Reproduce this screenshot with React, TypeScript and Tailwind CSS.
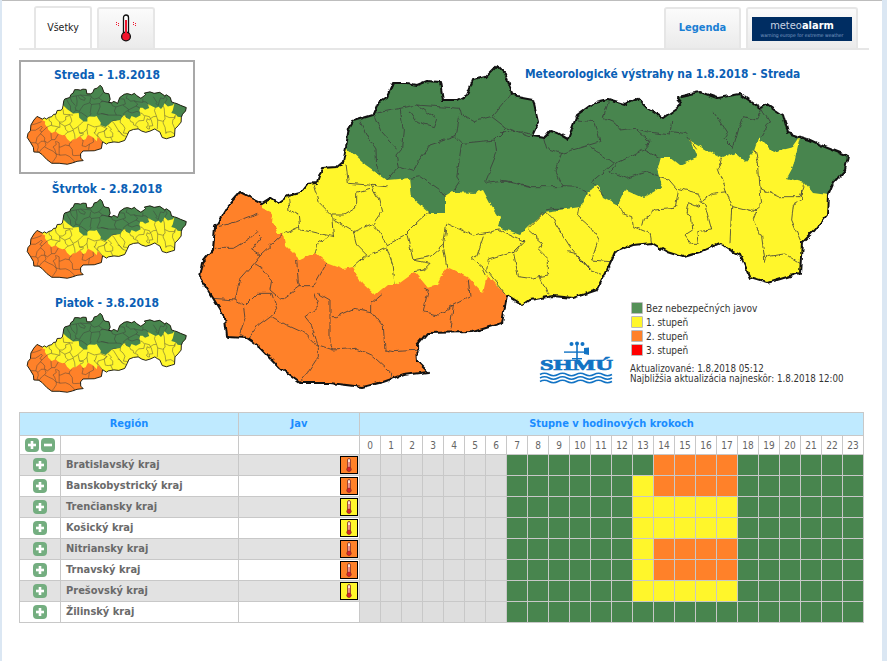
const FONT = "font-['DejaVu_Sans_Condensed','DejaVu_Sans',sans-serif]";

const OUTER =
  "M240,192 262,203 270,198 278,203 288,196 300,193 307,184 317,183 322,168 337,167 343,162 346,147 349,128 353,121 373,115 378,103 387,97 393,83 407,83 417,85 427,81 440,82 443,100 458,100 467,95 473,80 485,77 497,65 505,73 512,93 517,97 533,100 538,122 532,135 545,137 550,131 558,133 568,139 577,115 595,102 608,99 625,104 637,98 647,108 663,118 677,108 682,103 677,97 700,92 717,98 740,94 760,108 767,104 783,115 788,133 800,137 810,140 825,147 848,156 845,170 833,183 828,195 827,215 815,230 802,243 800,273 787,277 767,283 750,278 740,255 730,250 720,243 700,252 683,257 667,252 652,243 633,245 615,252 607,270 597,290 573,298 553,296 530,300 523,305 507,295 502,323 473,332 427,333 417,345 418,362 428,372 403,375 383,382 363,387 330,383 300,383 280,368 260,347 247,338 227,337 225,318 213,298 200,278 203,262 213,250 215,227 227,207Z";

const ORANGE =
  "M240,192 262,203 262,208 273,213 272,223 278,233 283,233 285,245 300,260 315,253 327,263 343,269 353,267 362,283 375,295 387,285 397,285 415,272 428,288 438,285 447,267 468,277 483,293 487,275 507,295 502,323 473,332 427,333 417,345 418,362 428,372 403,375 383,382 363,387 330,383 300,383 280,368 260,347 247,338 227,337 225,318 213,298 200,278 203,262 213,250 215,227 227,207Z";

const GREEN =
  "M346,147 349,128 353,121 373,115 378,103 387,97 393,83 407,83 417,85 427,81 440,82 443,100 458,100 467,95 473,80 485,77 497,65 505,73 512,93 517,97 533,100 538,122 532,135 545,137 550,131 558,133 568,139 577,115 595,102 608,99 625,104 637,98 647,108 663,118 677,108 682,103 677,97 700,92 717,98 740,94 760,108 767,104 783,115 788,133 800,137 810,140 825,147 848,156 845,170 833,183 828,195 813,193 805,183 787,178 793,167 800,137 793,147 773,152 759,138 755,150 745,162 735,153 723,158 707,150 690,140 697,158 680,165 670,157 660,157 657,168 662,187 643,198 625,190 618,205 603,197 598,185 588,192 580,207 545,212 528,227 520,235 498,227 500,218 490,203 483,190 475,193 453,192 445,197 445,213 430,213 412,197 410,178 387,180 363,163Z";

// inner borders, traced in 3x crop coordinates
const WEST_LINES = [
  "M510,185 535,235 558,270 560,320 575,345",
  "M555,165 575,215 620,265",
  "M555,160 630,145 640,210 635,265 618,285 625,320 590,360",
  "M630,145 680,135 740,175 730,200 680,185 655,150",
  "M680,135 810,145 815,165 850,185 905,170 950,205 1020,230",
  "M965,98 905,170",
  "M805,170 795,230 720,255 680,310 670,335 625,320",
  "M795,230 815,250 800,350 810,365 790,395",
  "M815,250 915,240 920,280 885,365 890,370 950,362 1020,378",
  "M915,240 950,205",
  "M660,355 690,350 755,395 765,410",
  "M468,310 475,370 535,375 590,380",
  "M540,370 565,415 575,455 550,490 590,555 640,530 650,520 680,490 720,455",
  "M370,375 385,425 425,465 460,465 500,440 500,400 540,388",
  "M295,410 300,450 325,465 330,510 365,515 430,530 425,465",
  "M430,480 490,515 550,490",
  "M490,515 500,555 530,585 490,620",
  "M415,530 385,550 375,580",
  "M285,520 330,500",
  "M650,520 670,600 720,610 700,630 675,635",
  "M590,560 610,620 615,675",
  "M530,590 590,565",
  "M670,600 720,590 760,555 770,620",
  "M770,490 760,555",
  "M770,490 825,515 850,525 930,510",
  "M930,510 1005,545 975,575 895,600",
  "M880,530 860,590 845,595 880,625 890,645",
  "M895,600 890,630 945,700",
  "M85,500 140,485 205,460",
  "M75,565 130,565 180,535 200,515 215,530 185,570 210,585 190,610 215,625 245,660 240,690 275,720 330,680 370,680 410,610",
  "M210,585 280,520",
  "M320,600 325,665 330,680",
  "M190,610 150,655 135,720 70,715",
  "M135,720 160,735 165,775 150,820 175,835 205,795 245,765 260,745 245,700 200,700 165,735",
  "M245,770 290,795 345,820 385,860 385,890 355,935 330,965",
  "M385,700 420,720 420,850 430,870 500,865 545,885 605,940 600,968",
  "M375,700 385,740 345,770 365,795 385,860",
  "M385,855 430,870",
  "M420,770 440,770 495,745 545,755 580,800 585,870 610,875 690,870",
  "M545,755 545,730 575,705",
  "M700,685 715,690 700,755 745,765 790,735 840,710 835,660",
  "M790,735 780,805",
];

const EAST_LINES = [
  "M0,155 60,155 130,170 140,205 185,220 165,270 190,320 235,322 275,345",
  "M0,300 90,320 190,320",
  "M185,220 300,185 285,125 230,120",
  "M270,200 300,220 340,250 275,305 310,345",
  "M325,65 310,115 345,130 360,150 405,145 440,155 510,165 515,120",
  "M405,145 450,185 430,210 400,225 350,250 330,275 380,295 440,275 475,285",
  "M430,210 475,232",
  "M515,155 555,160 590,205",
  "M640,95 685,165 675,180 700,205 715,150 730,110 770,120 785,85 810,125 780,175",
  "M85,445 135,395 160,420 210,500 270,570",
  "M140,390 165,385 190,385",
  "M240,380 235,410 270,440 295,480 275,540 330,545",
  "M85,450 130,490 115,510 145,540 145,585 90,595 55,590 40,515 75,480",
  "M205,515 225,520 270,570 305,580",
  "M120,590 150,655",
  "M355,375 365,400 395,410 400,440 450,460 455,490",
  "M430,420 465,390 525,385 535,335 505,300 475,292",
  "M425,440 430,420",
  "M535,325 595,340 605,365 640,340 680,335 655,265 665,235",
  "M600,365 615,375 635,450 590,455 595,490 575,490 555,465 578,450 575,415 558,400 565,365 600,380",
  "M680,335 695,380 690,490",
  "M695,380 755,395 785,370 780,325 775,245 765,210",
  "M780,325 835,350 900,350 915,310",
  "M905,330 905,360 880,375 875,420 905,490",
  "M770,390 760,415 785,470 795,545 800,530 855,522 900,550",
];

function SlovakiaMap({ className, outer, inner }: { className: string; outer: number; inner: number }) {
  return (
    <svg viewBox="195 60 660 330" className={className}>
      <defs>
        <filter id="rough" x="-2%" y="-2%" width="104%" height="104%" colorInterpolationFilters="sRGB">
          <feTurbulence type="fractalNoise" baseFrequency="0.13" numOctaves="2" seed="4" result="n" />
          <feDisplacementMap in="SourceGraphic" in2="n" scale="5" xChannelSelector="R" yChannelSelector="G" />
        </filter>
      </defs>
      <g filter="url(#rough)">
        <path d={OUTER} fill="#fff62b" />
        <path d={ORANGE} fill="#ff8129" />
        <path d={GREEN} fill="#48854e" />
        <g fill="none" stroke="#3c3c3c" strokeWidth={inner} strokeLinejoin="round">
          <g transform="translate(190 60) scale(.33333)">
            {WEST_LINES.map((d) => (
              <path key={d} d={d} vectorEffect="non-scaling-stroke" />
            ))}
          </g>
          <g transform="translate(500 80) scale(.33333)">
            {EAST_LINES.map((d) => (
              <path key={d} d={d} vectorEffect="non-scaling-stroke" />
            ))}
          </g>
        </g>
        <path d={OUTER} fill="none" stroke="#111" strokeWidth={outer} strokeLinejoin="round" vectorEffect="non-scaling-stroke" />
      </g>
    </svg>
  );
}

function DayThumb({ title, active }: { title: string; active?: boolean }) {
  return (
    <div className={`flex h-[114px] flex-col items-center border-2 pt-[4px] ${active ? "border-[#a8a8a8]" : "border-transparent"}`}>
      <div className="h-[18px] text-[12px] leading-[18px] font-bold text-[#0b5fb5]">{title}</div>
      <SlovakiaMap className="h-[81px] w-[162px]" outer={0.9} inner={0.45} />
    </div>
  );
}

function TabThermometer() {
  return (
    <svg viewBox="0 0 24 28" className="h-[28px] w-[24px]">
      <rect x="9.5" y="1" width="5" height="20" rx="2.5" fill="#fff" stroke="#111" strokeWidth="1.3" />
      <circle cx="12" cy="22.5" r="4.4" fill="#f0142d" stroke="#111" strokeWidth="1.3" />
      <rect x="11" y="6" width="2" height="15" fill="#f0142d" />
      <g fill="#f0142d">
        <rect x="2" y="8" width="1" height="1" />
        <rect x="4" y="9" width="1" height="1" />
        <rect x="2" y="10" width="1" height="1" />
        <rect x="4" y="11" width="1" height="1" />
        <rect x="19" y="8" width="1" height="1" />
        <rect x="21" y="9" width="1" height="1" />
        <rect x="19" y="10" width="1" height="1" />
        <rect x="21" y="11" width="1" height="1" />
      </g>
    </svg>
  );
}

function SmallThermometer() {
  return (
    <svg viewBox="0 0 6 14" className="h-[14px] w-[6px]">
      <rect x="1.5" y="0.5" width="3" height="10" rx="1.5" fill="#fbe3d6" stroke="#7d2a1c" strokeWidth="0.8" />
      <circle cx="3" cy="11.3" r="2.2" fill="#d8242c" stroke="#7d2a1c" strokeWidth="0.7" />
      <rect x="2.6" y="4" width="0.9" height="6" fill="#d8242c" />
    </svg>
  );
}

function PlusButton({ minus }: { minus?: boolean }) {
  return (
    <span className="inline-flex h-[14px] w-[14px] items-center justify-center rounded-[4px] bg-[#74ae80]">
      <svg viewBox="0 0 14 14" className="h-[14px] w-[14px]">
        <rect x="3" y="5.7" width="8" height="2.6" fill="#fff" />
        {!minus && <rect x="5.7" y="3" width="2.6" height="8" fill="#fff" />}
      </svg>
    </span>
  );
}

function ShmuLogo() {
  return (
    <svg viewBox="0 0 76 46" className="h-[46px] w-[76px]">
      <g fill="#1273c4">
        <rect x="37.2" y="4" width="1.6" height="18" />
        <circle cx="32.5" cy="5" r="2" />
        <circle cx="38" cy="4.5" r="2" />
        <circle cx="43.5" cy="5" r="2" />
        <rect x="25" y="12.4" width="22" height="1.4" />
        <path d="M45 9 L50 8.5 L50 16 L45 15Z" />
        <rect x="33" y="19" width="10" height="1.4" />
        <text
          x="1"
          y="31"
          fontFamily="'Liberation Serif', serif"
          fontWeight="bold"
          fontSize="14.5"
          textLength="73"
          lengthAdjust="spacingAndGlyphs"
          stroke="#1273c4"
          strokeWidth="0.7"
        >
          SHMÚ
        </text>
      </g>
      <g fill="none" stroke="#1273c4" strokeWidth="1.5">
        <path d="M1 35.5 q4.5 -2.4 9 0 t9 0 t9 0 t9 0 t9 0 t9 0 t9 0 t9 0" />
        <path d="M1 39 q4.5 -2.4 9 0 t9 0 t9 0 t9 0 t9 0 t9 0 t9 0 t9 0" />
        <path d="M1 42.5 q4.5 -2.4 9 0 t9 0 t9 0 t9 0 t9 0 t9 0 t9 0 t9 0" />
      </g>
    </svg>
  );
}

const HOURS = Array.from({ length: 24 }, (_, i) => i);

type Pattern = "o" | "y" | "yo" | "g";

const REGIONS: { name: string; level: "o" | "y" | null; pattern: Pattern }[] = [
  { name: "Bratislavský kraj", level: "o", pattern: "o" },
  { name: "Banskobystrický kraj", level: "o", pattern: "yo" },
  { name: "Trenčiansky kraj", level: "y", pattern: "y" },
  { name: "Košický kraj", level: "y", pattern: "y" },
  { name: "Nitriansky kraj", level: "o", pattern: "yo" },
  { name: "Trnavský kraj", level: "o", pattern: "yo" },
  { name: "Prešovský kraj", level: "y", pattern: "y" },
  { name: "Žilinský kraj", level: null, pattern: "g" },
];

function hourColor(pattern: Pattern, hour: number) {
  if (hour < 7) return "bg-[#dedede]";
  if (hour >= 13 && hour <= 17 && pattern !== "g") {
    if (pattern === "y") return "bg-[#fff62b]";
    if (hour >= 14) return "bg-[#ff8129]";
    if (pattern === "yo") return "bg-[#fff62b]";
  }
  return "bg-[#48854e]";
}

const LEGEND = [
  ["bg-[#559158]", "Bez nebezpečných javov"],
  ["bg-[#fff62b]", "1. stupeň"],
  ["bg-[#ff8129]", "2. stupeň"],
  ["bg-[#ff0000]", "3. stupeň"],
];

const TAB = "h-[41px] rounded-t-[3px] border-2 border-b-0 border-[#e6e6e6] bg-gradient-to-b from-[#fbfbfb] to-[#ebebeb]";
const CELL = "border border-[#c8c8c8] p-0";

export default function App() {
  return (
    <div className={`flex h-[661px] w-[887px] bg-[#dbe7f3] pl-[2px] pr-[5px] ${FONT}`}>
      <div className="w-[880px] border-t border-[#bdbdbd] bg-white">
        <div className="mx-[17px] mt-[7px] flex h-[42px] w-[850px] items-end gap-[5px] border-b-2 border-[#e6e6e6] pl-[15px]">
          <div className="flex h-[42px] w-[58px] items-center justify-center rounded-t-[3px] border-2 border-b-0 border-[#e6e6e6] bg-white text-[10.5px] text-[#222]">
            Všetky
          </div>
          <div className={`${TAB} flex w-[58px] justify-center pt-[5px]`}>
            <TabThermometer />
          </div>
          <div className={`${TAB} ml-auto flex w-[77px] items-center justify-center text-[11px] font-bold text-[#1a7fd4]`}>
            Legenda
          </div>
          <div className={`${TAB} mr-[11px] flex w-[112px] items-center justify-center`}>
            <div className="flex h-[24px] w-[100px] flex-col items-center justify-center bg-[#002d62] text-white">
              <div className="text-[11px] leading-[12px] text-[#c8d4e4]">
                meteo<span className="font-bold text-white">alarm</span>
              </div>
              <div className="text-[5px] leading-[6px] text-[#7f9cc4]">warning europe for extreme weather</div>
            </div>
          </div>
        </div>

        <div className="mt-[10px] ml-[17px] flex">
          <div className="flex w-[176px] flex-col">
            <DayThumb title="Streda - 1.8.2018" active />
            <DayThumb title="Štvrtok - 2.8.2018" />
            <DayThumb title="Piatok - 3.8.2018" />
          </div>
          <div className="relative h-[342px] w-[660px]">
            <SlovakiaMap className="h-[330px] w-[660px]" outer={2} inner={0.8} />
            <div className="absolute top-[6px] left-[330px] text-[11.85px] leading-[16px] font-bold whitespace-nowrap text-[#0b5fb5]">
              Meteorologické výstrahy na 1.8.2018 - Streda
            </div>
            <div className="absolute top-[242px] left-[436px] flex flex-col gap-[2px]">
              {LEGEND.map(([color, label]) => (
                <div key={label} className="flex h-[12px] items-center gap-[2px] text-[10px] whitespace-nowrap text-[#333]">
                  <span className={`h-[12px] w-[12px] rounded-[1px] border border-[#bbb] ${color}`} />
                  <span className="ml-[1px]">{label}</span>
                </div>
              ))}
            </div>
            <div className="absolute top-[279px] left-[344px]">
              <ShmuLogo />
            </div>
            <div className="absolute top-[304px] left-[435px] text-[9.7px] leading-[10px] whitespace-nowrap text-[#333]">
              <div>Aktualizované: 1.8.2018 05:12</div>
              <div>Najbližšia aktualizácia najneskôr: 1.8.2018 12:00</div>
            </div>
          </div>
        </div>

        <table className="mt-[10px] ml-[17px] w-[845px] table-fixed border-collapse">
          <colgroup>
            <col className="w-[41px]" />
            <col className="w-[178px]" />
            <col className="w-[121px]" />
            {HOURS.map((h) => (
              <col key={h} className="w-[21px]" />
            ))}
          </colgroup>
          <tbody>
            <tr className="h-[23px] bg-[#bfeaff] text-[11px] font-bold text-[#1a8cff]">
              <td colSpan={2} className={`${CELL} text-center`}>
                Región
              </td>
              <td className={`${CELL} text-center`}>Jav</td>
              <td colSpan={24} className={`${CELL} text-center`}>
                Stupne v hodinových krokoch
              </td>
            </tr>
            <tr className="h-[19px] bg-white">
              <td className={`${CELL} text-center leading-none`}>
                <div className="flex justify-center gap-[2px]">
                  <PlusButton />
                  <PlusButton minus />
                </div>
              </td>
              <td className={CELL} />
              <td className={CELL} />
              {HOURS.map((h) => (
                <td key={h} className={`${CELL} text-center text-[10px] text-[#666]`}>
                  {h}
                </td>
              ))}
            </tr>
            {REGIONS.map((r, i) => (
              <tr key={r.name} className={`h-[21px] ${i % 2 === 0 ? "bg-[#e2e2e2]" : "bg-white"}`}>
                <td className={CELL}>
                  <div className="flex justify-center">
                    <PlusButton />
                  </div>
                </td>
                <td className={`${CELL} pl-[5px] text-[11px] font-bold text-[#6a6a6a]`}>{r.name}</td>
                <td className={CELL}>
                  <div className="flex justify-end pr-[1px]">
                    {r.level && (
                      <span className={`flex h-[18px] w-[18px] items-center justify-center border border-black ${r.level === "o" ? "bg-[#ff8129]" : "bg-[#fff62b]"}`}>
                        <SmallThermometer />
                      </span>
                    )}
                  </div>
                </td>
                {HOURS.map((h) => (
                  <td key={h} className={`${CELL} ${hourColor(r.pattern, h)}`} />
                ))}
              </tr>
            ))}
          </tbody>
        </table>
      </div>
    </div>
  );
}
